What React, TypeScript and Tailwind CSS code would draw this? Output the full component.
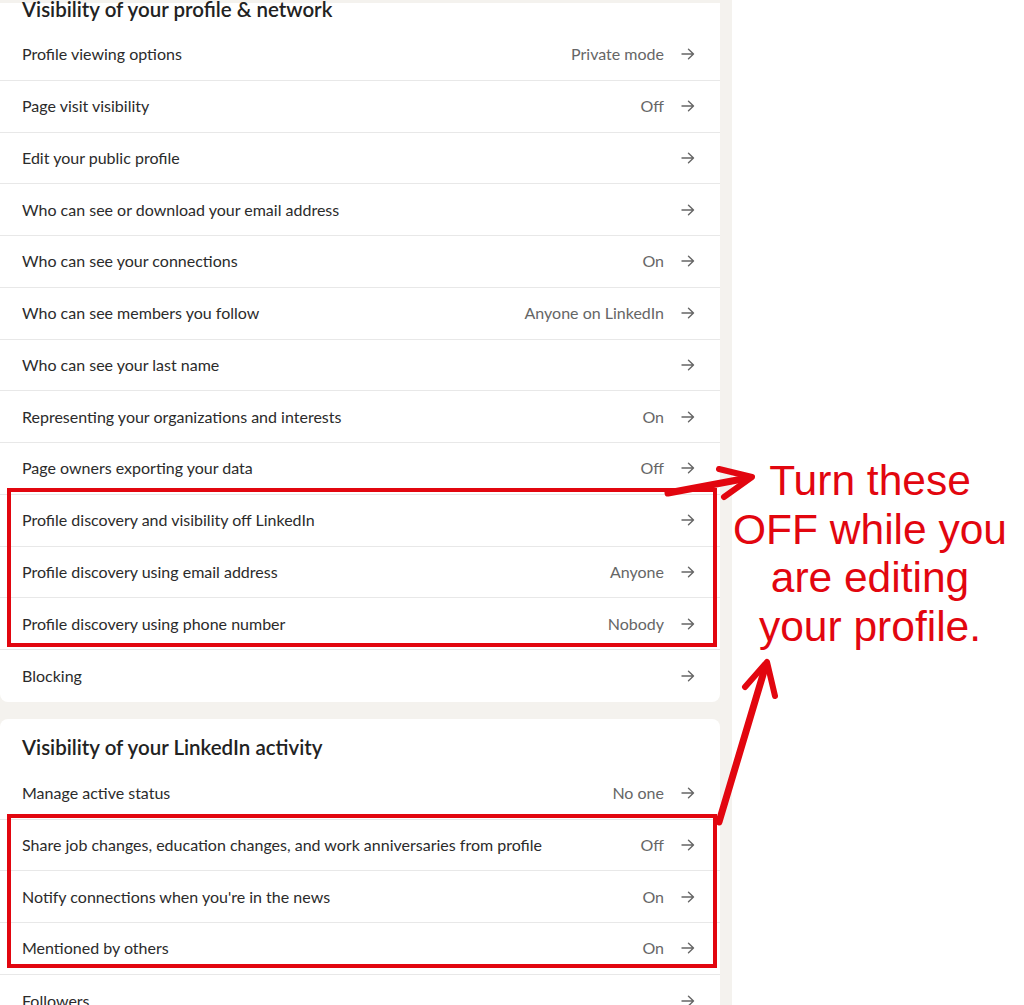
import React from "react";

type Row = { label: string; value?: string };

const profileRows: Row[] = [
  { label: "Profile viewing options", value: "Private mode" },
  { label: "Page visit visibility", value: "Off" },
  { label: "Edit your public profile" },
  { label: "Who can see or download your email address" },
  { label: "Who can see your connections", value: "On" },
  { label: "Who can see members you follow", value: "Anyone on LinkedIn" },
  { label: "Who can see your last name" },
  { label: "Representing your organizations and interests", value: "On" },
  { label: "Page owners exporting your data", value: "Off" },
  { label: "Profile discovery and visibility off LinkedIn" },
  { label: "Profile discovery using email address", value: "Anyone" },
  { label: "Profile discovery using phone number", value: "Nobody" },
  { label: "Blocking" },
];

const activityRows: Row[] = [
  { label: "Manage active status", value: "No one" },
  {
    label:
      "Share job changes, education changes, and work anniversaries from profile",
    value: "Off",
  },
  { label: "Notify connections when you're in the news", value: "On" },
  { label: "Mentioned by others", value: "On" },
  { label: "Followers" },
];

function Arrow() {
  return (
    <svg width="14" height="12" viewBox="0 0 14 12" fill="none" className="shrink-0">
      <path
        d="M1 6h11.5M7.5 1.2 12.5 6l-5 4.8"
        stroke="#666"
        strokeWidth="1.4"
        strokeLinecap="round"
        strokeLinejoin="round"
      />
    </svg>
  );
}

function SettingRow({ row, last }: { row: Row; last: boolean }) {
  return (
    <div
      className={`h-[51.75px] flex items-center pl-[22px] pr-[25px] ${
        last ? "" : "border-b border-[#e8e8e8]"
      }`}
    >
      <span className="flex-1 text-[16px] text-[#2b2b2b]">{row.label}</span>
      {row.value && (
        <span className="text-[16px] text-[#666] mr-[17px]">{row.value}</span>
      )}
      <Arrow />
    </div>
  );
}

export default function App() {
  return (
    <div
      className="relative w-[1024px] h-[1005px] flex bg-white overflow-hidden"
      style={{ fontFamily: "Lato, 'Open Sans', sans-serif" }}
    >
      {/* Settings column */}
      <div className="w-[732px] shrink-0 bg-[#f4f2ee] flex flex-col gap-[17px] pt-[3px]">
        <div className="w-[720px] bg-white rounded-b-lg">
          <h2 className="mt-[-6px] h-[32px] pl-[22px] text-[20.5px] leading-[24px] font-semibold text-[#222]">
            Visibility of your profile &amp; network
          </h2>
          {profileRows.map((r, i) => (
            <SettingRow key={r.label} row={r} last={i === profileRows.length - 1} />
          ))}
        </div>

        <div className="w-[720px] flex-1 bg-white rounded-t-lg">
          <h2 className="pt-[16px] h-[49px] pl-[22px] text-[20.5px] leading-[24px] font-semibold text-[#222]">
            Visibility of your LinkedIn activity
          </h2>
          {activityRows.map((r, i) => (
            <SettingRow key={r.label} row={r} last={i === activityRows.length - 1} />
          ))}
        </div>
      </div>

      {/* Annotation note */}
      <div
        className="flex-1 pt-[457px] pr-[16px] text-center text-[42.5px] leading-[48.5px] text-[#e2060f]"
        style={{ fontFamily: "'Liberation Sans', Arial, sans-serif" }}
      >
        <p>Turn these</p>
        <p>OFF while you</p>
        <p>are editing</p>
        <p>your profile.</p>
      </div>

      {/* Red boxes and arrows drawn over the page */}
      <svg
        className="absolute inset-0 pointer-events-none"
        width="1024"
        height="1005"
        viewBox="0 0 1024 1005"
        fill="none"
      >
        <g stroke="#e2060f" strokeWidth="4">
          <rect x="9" y="490" width="706" height="155" />
          <rect x="9" y="816" width="706" height="150" />
        </g>
        <g stroke="#e2060f" strokeLinecap="round" strokeLinejoin="round">
          <path d="M668 493 L748 478" strokeWidth="7" />
          <path d="M719 469 L752 477 L724 497" strokeWidth="6" />
          <path d="M719 822 L765 668" strokeWidth="7" />
          <path d="M745 687 L767 662 L775 696" strokeWidth="6" />
        </g>
      </svg>
    </div>
  );
}
